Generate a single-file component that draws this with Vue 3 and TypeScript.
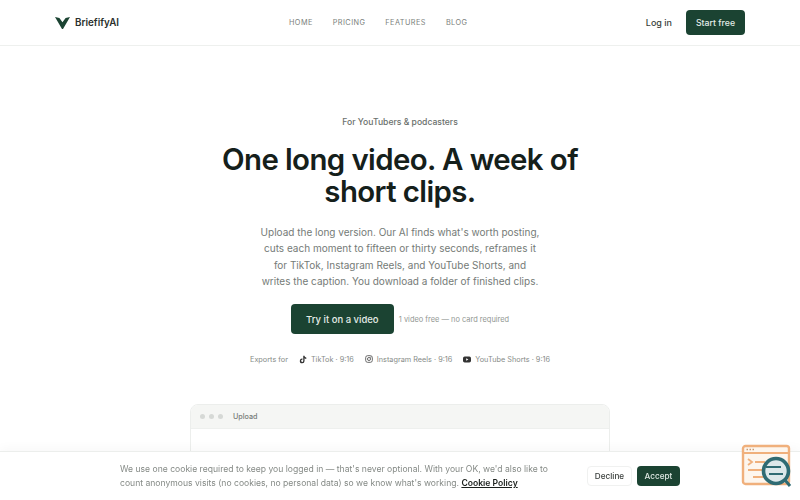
<script setup lang="ts">
const navLinks: string[] = ['Home', 'Pricing', 'Features', 'Blog']
</script>

<template>
  <div class="page">
    <header class="top">
      <a class="brand">
        <svg width="15" height="12" viewBox="0 0 15 12">
          <path d="M0 0 4.4 1 7.5 5.2 10.6 1 15 0 8 12H7Z" fill="#1b4332" />
        </svg>
        <span>BriefifyAI</span>
      </a>
      <nav class="nav">
        <a v-for="l in navLinks" :key="l">{{ l }}</a>
      </nav>
      <div class="actions">
        <a class="login">Log in</a>
        <a class="start">Start free</a>
      </div>
    </header>

    <main class="hero">
      <p class="eyebrow">For YouTubers &amp; podcasters</p>
      <h1>One long video. A week of short clips.</h1>
      <p class="lead">Upload the long version. Our AI finds what's worth posting, cuts each moment to fifteen or thirty seconds, reframes it for TikTok, Instagram Reels, and YouTube Shorts, and writes the caption. You download a folder of finished clips.</p>
      <div class="cta">
        <a class="try">Try it on a video</a>
        <span class="note">1 video free — no card required</span>
      </div>
      <div class="exports">
        <span class="label">Exports for</span>
        <span class="item">
          <svg width="8" height="9" viewBox="0 0 24 24" fill="#333"><path d="M16.6 1h-3.9v15.2a3.1 3.1 0 1 1-3.1-3.2c.3 0 .6 0 .9.1v-4a7.1 7.1 0 1 0 6.1 7.1V8.5a9 9 0 0 0 5.2 1.7V6.3a5.3 5.3 0 0 1-5.2-5.3Z" /></svg>
          TikTok · 9:16
        </span>
        <span class="item">
          <svg width="8" height="8" viewBox="0 0 24 24" fill="none" stroke="#555" stroke-width="2.6"><rect x="2" y="2" width="20" height="20" rx="6" /><circle cx="12" cy="12" r="4.6" /><circle cx="17.6" cy="6.4" r=".6" /></svg>
          Instagram Reels · 9:16
        </span>
        <span class="item">
          <svg width="8" height="7" viewBox="0 0 24 20"><rect y="1" width="24" height="18" rx="5" fill="#333" /><path d="M9.6 6v8l6.6-4Z" fill="#fff" /></svg>
          YouTube Shorts · 9:16
        </span>
      </div>
      <section class="window">
        <div class="bar">
          <i></i><i></i><i></i>
          <span>Upload</span>
        </div>
      </section>
    </main>

    <aside class="cookie">
      <p>We use one cookie required to keep you logged in — that's never optional. With your OK, we'd also like to count anonymous visits (no cookies, no personal data) so we know what's working. <a>Cookie Policy</a></p>
      <button class="decline">Decline</button>
      <button class="accept">Accept</button>
    </aside>

    <svg class="badge" width="51" height="50" viewBox="0 0 51 50" fill="none">
      <rect x="2" y="2" width="46" height="38" rx="2.5" fill="#fdf6ee" stroke="#f0b07c" stroke-width="2.4" />
      <path d="M2 9H48" stroke="#f0b07c" stroke-width="2" />
      <path d="M5.5 5.5h1.5M8.5 5.5h1.5M11.5 5.5h1.5" stroke="#c99a74" stroke-width="1.4" />
      <path d="M7 15l4 3-4 3M14 18h10M7 26h16M12 33h12" stroke="#f0b07c" stroke-width="1.8" />
      <circle cx="35" cy="27" r="12.5" fill="#dde8ea" stroke="#2f6b73" stroke-width="3.6" />
      <path d="M25 23h15M28 30h14" stroke="#2f6b73" stroke-width="1.8" />
      <path d="M44 36 49 42" stroke="#2f6b73" stroke-width="3" />
    </svg>
  </div>
</template>

<style scoped>
.page {
  font-family: Inter, "Liberation Sans", sans-serif;
  color: #1a1f1c;
  height: 500px;
  overflow: hidden;
  background: #fff;
}
a { cursor: pointer; }
.top {
  height: 46px;
  box-sizing: border-box;
  border-bottom: 1px solid #eef0ee;
  padding: 0 55px;
  display: grid;
  grid-template-columns: 234px auto 1fr;
  align-items: center;
}
.brand {
  display: flex;
  align-items: center;
  gap: 5px;
  font-size: 9.8px;
  font-weight: 600;
  color: #2a2f2c;
}
.nav {
  display: flex;
  gap: 20px;
  font-size: 7.3px;
  letter-spacing: 0.06em;
  text-transform: uppercase;
  color: #7a807c;
}
.actions {
  display: flex;
  justify-content: flex-end;
  align-items: center;
  gap: 14px;
  font-size: 9px;
  font-weight: 500;
}
.login { color: #3a3f3c; }
.start {
  background: #1b4332;
  color: #e4ece7;
  height: 25px;
  width: 59px;
  border-radius: 4px;
  display: flex;
  align-items: center;
  justify-content: center;
  font-size: 8.7px;
}
.hero {
  display: flex;
  flex-direction: column;
  align-items: center;
  padding-top: 70px;
}
.eyebrow {
  margin: 0;
  font-size: 8.6px;
  font-weight: 500;
  line-height: 12px;
  color: #6a706c;
}
h1 {
  margin: 16px 0 0;
  width: 400px;
  text-align: center;
  font-size: 29.4px;
  line-height: 32px;
  font-weight: 600;
  letter-spacing: -0.02em;
  color: #15201b;
}
.lead {
  margin: 16px 0 0;
  width: 280px;
  text-align: center;
  font-size: 10px;
  line-height: 16.3px;
  color: #757b77;
}
.cta {
  margin-top: 15px;
  display: flex;
  align-items: center;
  gap: 5px;
}
.try {
  background: #1b4332;
  color: #e4ece7;
  width: 103px;
  height: 30px;
  border-radius: 4px;
  display: flex;
  align-items: center;
  justify-content: center;
  font-size: 9.5px;
  font-weight: 500;
}
.note {
  font-size: 7.45px;
  color: #929793;
}
.exports {
  margin-top: 20px;
  height: 10px;
  display: flex;
  align-items: center;
  gap: 11px;
  font-size: 7.3px;
  color: #868b87;
}
.item {
  display: flex;
  align-items: center;
  gap: 4px;
}
.window {
  margin-top: 40px;
  width: 420px;
  height: 200px;
  box-sizing: border-box;
  border: 1px solid #eceeec;
  border-radius: 8px;
  overflow: hidden;
}
.bar {
  height: 23px;
  background: #f5f6f4;
  border-bottom: 1px solid #eef0ee;
  display: flex;
  align-items: center;
  gap: 4px;
  padding-left: 9px;
}
.bar i {
  width: 5px;
  height: 5px;
  border-radius: 50%;
  background: #d6d9d6;
}
.bar span {
  margin-left: 6px;
  font-size: 7.2px;
  font-weight: 500;
  color: #757b77;
}
.cookie {
  position: fixed;
  left: 0;
  right: 0;
  bottom: 0;
  height: 49px;
  box-sizing: border-box;
  background: #fff;
  border-top: 1px solid #eceeec;
  box-shadow: 0 -3px 10px rgba(0, 0, 0, 0.03);
  display: flex;
  align-items: center;
  padding: 0 120px;
}
.cookie p {
  margin: 0 auto 0 0;
  width: 450px;
  font-size: 8.6px;
  line-height: 14px;
  color: #858a86;
}
.cookie p a {
  color: #1a1f1c;
  font-weight: 600;
  text-decoration: underline;
}
.cookie button {
  font-family: inherit;
  font-size: 8.2px;
  font-weight: 500;
  height: 20px;
  border-radius: 4px;
  padding: 0;
}
.decline {
  width: 45px;
  background: #fff;
  border: 1px solid #f0f1f0;
  color: #3a3f3c;
  margin-right: 5px;
}
.accept {
  width: 43px;
  background: #1b4332;
  border: 0;
  color: #dfe9e3;
}
.badge {
  position: fixed;
  right: 8px;
  bottom: 6px;
}
</style>
